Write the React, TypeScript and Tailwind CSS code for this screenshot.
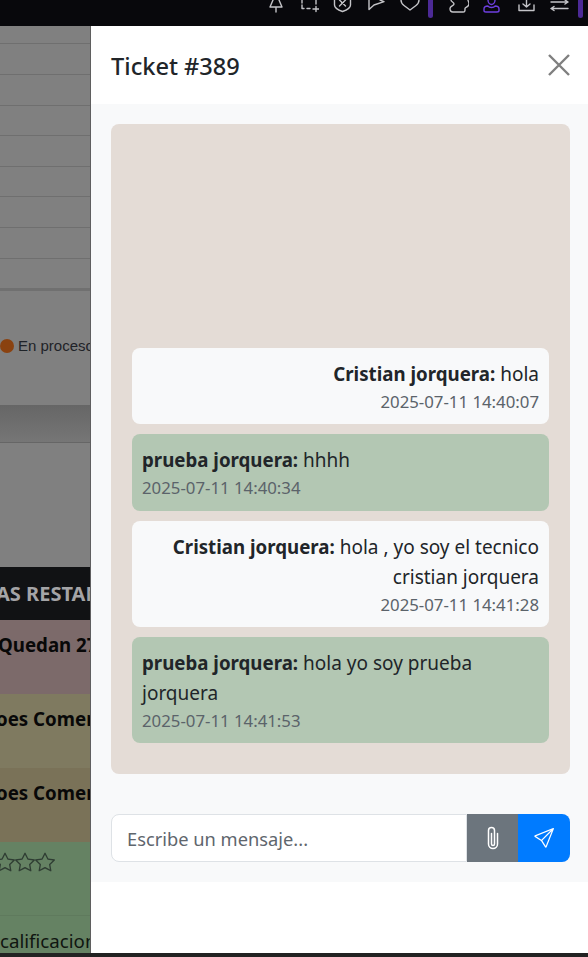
import React from 'react';
import { BsPaperclip, BsSend, BsStar } from 'react-icons/bs';

const messages = [
  { who: 'Cristian jorquera:', text: 'hola', time: '2025-07-11 14:40:07', mine: true },
  { who: 'prueba jorquera:', text: 'hhhh', time: '2025-07-11 14:40:34', mine: false },
  { who: 'Cristian jorquera:', text: 'hola , yo soy el tecnico cristian jorquera', time: '2025-07-11 14:41:28', mine: true },
  { who: 'prueba jorquera:', text: 'hola yo soy prueba jorquera', time: '2025-07-11 14:41:53', mine: false },
];

// browser toolbar icons, cut off by the top of the window
const ToolIcon = ({ d, className, color = '#c4c4c8' }: { d: string; className: string; color?: string }) => (
  <svg width="20" height="14" viewBox="0 0 20 14" fill="none" stroke={color} strokeWidth="1.4" strokeLinecap="round" strokeLinejoin="round" className={`block shrink-0 ${className}`}>
    <path d={d} />
  </svg>
);

const TopBar = () => (
  <div className="h-[26px] bg-[#08080c] flex items-start pl-[266px] overflow-hidden shrink-0">
    <ToolIcon className="" d="M7 0L4 7H16L13 0M10 7V12" />
    <ToolIcon className="ml-[13px]" d="M3 0V3M3 5V8.5H5M8 8.5H11M17 0V4M17 6.5V11.5M14 9H20" />
    <ToolIcon className="ml-[14px]" d="M1.5 0V5C1.5 8 5 10 9.5 11.5C14 10 17.5 8 17.5 5V0M6.5 0L12.5 6M12.5 0L6.5 6" />
    <ToolIcon className="ml-[14px]" d="M2 0V9.5L7 5L17 1.7L13 0" />
    <ToolIcon className="ml-[13px]" d="M1 0C1 2 2 4 4 5.5L10 10L16 5.5C18 4 19 2 19 0" />
    <div className="w-[5px] h-[18px] rounded-b-full bg-[#4c2a96] ml-[8px] shrink-0" />
    <ToolIcon className="ml-[16px]" d="M2 0C2 2 5 2 5 4C5 6 1 6 1 8.5C1 11 2 12 4 12H14C16 12 16 11 16 8.5C16 7 20 7 20 4C20 2 19 1 19 0" />
    <ToolIcon className="ml-[13px]" color="#6d3fe0" d="M2 9C2 7 4 6 6 6C7 8 12 8 13 6C15 6 17 7 17 9V10.5C17 11.5 16 12 15 12H4C3 12 2 11.5 2 10.5ZM6 0C6 3 8 4.5 9.5 4.5C11 4.5 13 3 13 0" />
    <ToolIcon className="ml-[15px]" d="M2 5V10.5H17V5M9.5 0V7M6 4L9.5 7L13 4" />
    <ToolIcon className="ml-[13px]" d="M1 2H18M15 0L18 2L15 4M1 8.5H18M4 6.5L1 8.5L4 10.5" />
    <div className="w-[5px] h-[18px] rounded-b-full bg-[#4c2a96] ml-[8px] shrink-0" />
  </div>
);

const Backdrop = () => (
  <div className="w-[90px] shrink-0 bg-[#808080] overflow-hidden flex flex-col font-['Noto_Sans',sans-serif]">
    <div className="h-[262px] shrink-0 flex flex-col">
      {[18, 31, 31, 30, 31, 30, 31, 31].map((h, i) => (
        <div key={i} className="border-b border-[#6f6f6f]" style={{ height: h }} />
      ))}
    </div>
    <div className="h-[3px] bg-[#707070] shrink-0" />
    <div className="h-[114px] shrink-0 flex items-center pb-[4px] font-['Liberation_Sans',sans-serif]">
      <div className="w-[14px] h-[14px] rounded-full bg-[#8a4210] shrink-0" />
      <span className="ml-[4px] text-[15px] whitespace-nowrap text-[#1f2328]">En proceso</span>
    </div>
    <div className="h-[38px] shrink-0 bg-gradient-to-b from-[#666666] to-[#767676] border-b border-[#666666]" />
    <div className="h-[124px] shrink-0 bg-[#808080]" />
    <div className="h-[53px] shrink-0 bg-[#111214] flex items-center">
      <span className="-ml-[4px] font-bold text-[20px] whitespace-nowrap text-[#a4a4a6]">AS RESTANTES</span>
    </div>
    <div className="h-[74px] shrink-0 bg-[#7c6a6a] pt-[11px]">
      <div className="-ml-[2px] font-bold text-[18.7px] whitespace-nowrap text-[#080808]">Quedan 27</div>
    </div>
    <div className="h-[74px] shrink-0 bg-[#7f7a60] pt-[11px]">
      <div className="-ml-[4px] font-bold text-[18.7px] whitespace-nowrap text-[#080808]">oes Comer</div>
    </div>
    <div className="h-[74px] shrink-0 bg-[#7a7258] pt-[11px]">
      <div className="-ml-[4px] font-bold text-[18.7px] whitespace-nowrap text-[#080808]">oes Comer</div>
    </div>
    <div className="h-[74px] shrink-0 bg-[#658263] pt-[10px] border-b border-[#5f7a5d] flex">
      {[0, 1, 2].map(i => (
        <BsStar key={i} size={20} className="shrink-0 text-[#2f3d33]" style={{ marginLeft: i === 0 ? -5 : 0 }} />
      ))}
    </div>
    <div className="flex-1 bg-[#658263] pt-[11px]">
      <div className="text-[18.7px] leading-[27px] whitespace-nowrap text-[#101510]">calificacion</div>
    </div>
  </div>
);

const Bubble = ({ m }: { m: (typeof messages)[number] }) => (
  <div className={`rounded-lg pt-[11px] px-[10px] pb-[10px] ${m.mine ? 'bg-[#f8f9fa] text-right' : 'bg-[#b3c7b3]'}`}>
    <div className="text-[19px] leading-[30px] text-[#212529]">
      <strong className="font-bold text-[18.7px]">{m.who}</strong> {m.text}
    </div>
    <div className="text-[16.8px] leading-[25.25px] text-[#5b636a]">{m.time}</div>
  </div>
);

export default function App() {
  return (
    <div className="w-[588px] h-[957px] flex flex-col overflow-hidden bg-[#222222] font-['Noto_Sans',sans-serif]">
      <TopBar />
      <div className="h-[927px] flex shrink-0">
        <Backdrop />
        <div className="flex-1 bg-white border-l border-[#5f5f5f] flex flex-col">
          <div className="h-[78px] shrink-0 flex items-center justify-between pl-[20px] pr-[18px]">
            <h1 className="text-[23.6px] font-medium text-[#212529] pt-[3px]">Ticket #389</h1>
            <svg width="22" height="22" viewBox="0 0 22 22" fill="none" stroke="#7f7f7f" strokeWidth="2.4">
              <path d="M1 1L21 21M21 1L1 21" />
            </svg>
          </div>
          <div className="h-[778px] shrink-0 bg-[#f8f9fa] pl-[20px] pr-[18px] pt-[20px]">
            <div className="h-[650px] rounded-lg bg-[#e4dcd6] pt-[21px] px-[21px] pb-[31px] flex flex-col justify-end gap-[10px]">
              {messages.map((m, i) => <Bubble key={i} m={m} />)}
            </div>
            <div className="mt-[40px] flex h-[48px]">
              <input
                placeholder="Escribe un mensaje..."
                className="flex-1 min-w-0 bg-white border border-[#dee2e6] rounded-l-lg px-[15px] pt-[2px] text-[18.3px] placeholder:text-[#5f666d] outline-none"
              />
              <button className="w-[51px] bg-[#6c757d] flex items-center justify-center text-white">
                <BsPaperclip size={24} />
              </button>
              <button className="w-[52px] bg-[#007bff] rounded-r-lg flex items-center justify-center text-white">
                <BsSend size={20} />
              </button>
            </div>
          </div>
          <div className="flex-1 bg-white" />
        </div>
      </div>
    </div>
  );
}
